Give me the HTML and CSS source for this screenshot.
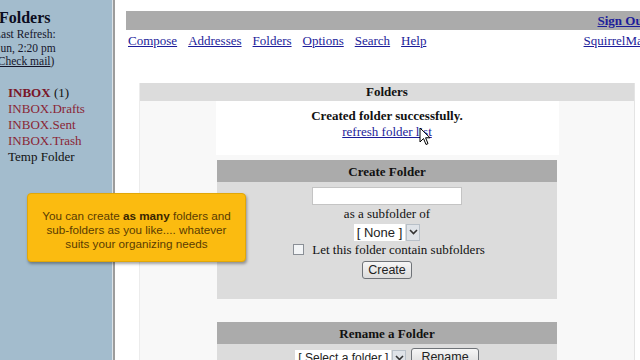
FILE: index.html
```html
<!DOCTYPE html>
<html lang="en">
<head>
  <meta charset="UTF-8">
  <title>SquirrelMail - Folders</title>
  <link rel="stylesheet" href="styles.css">
</head>
<body>

  <div class="page">
    <!-- left folder frame -->
    <div class="left">
      <div class="left-title">Folders</div>
      <div class="refresh">
        Last Refresh:<br>
        Sun, 2:20 pm<br>
        (<a href="#">Check mail</a>)
      </div>
      <ul class="folder-list">
        <li><span class="inbox">INBOX</span> (1)</li>
        <li class="sub">INBOX.Drafts</li>
        <li class="sub">INBOX.Sent</li>
        <li class="sub">INBOX.Trash</li>
        <li>Temp Folder</li>
      </ul>
    </div>
    <div class="divider"></div>

    <!-- right main frame -->
    <div class="right">
      <div class="topbar"><a href="#">Sign Out</a></div>
      <div class="nav">
        <div class="nav-links">
          <a href="#">Compose</a>
          <a href="#">Addresses</a>
          <a href="#">Folders</a>
          <a href="#">Options</a>
          <a href="#">Search</a>
          <a href="#">Help</a>
        </div>
        <a href="#" class="brand">SquirrelMail</a>
      </div>

      <div class="folders-box">
        <div class="folders-title">Folders</div>

        <div class="message">
          <b>Created folder successfully.</b><br>
          <a href="#" class="refresh-link">refresh folder list</a>
          <svg class="cursor" width="12" height="19" viewBox="0 0 12 19">
            <path d="M1 1 L1 15 L4.5 11.5 L7 17.5 L9 16.6 L6.6 10.8 L11 10.8 Z" fill="#fff" stroke="#000" stroke-width="1" stroke-linejoin="round"/>
          </svg>
        </div>

        <div class="panel">
          <div class="panel-head">Create Folder</div>
          <div class="panel-body">
            <div class="text-input"></div>
            <div class="row">as a subfolder of</div>
            <div class="row">
              <span class="select"><span class="select-val">[ None ]</span><span class="select-arrow"><svg width="9" height="6" viewBox="0 0 9 6"><path d="M1 1 L4.5 4.5 L8 1" fill="none" stroke="#333" stroke-width="1.6"/></svg></span></span>
            </div>
            <div class="row check-row"><span class="checkbox"></span>Let this folder contain subfolders</div>
            <div class="row"><span class="button">Create</span></div>
          </div>
        </div>

        <div class="panel rename">
          <div class="panel-head">Rename a Folder</div>
          <div class="panel-body rename-body">
            <span class="select"><span class="select-val">[ Select a folder ]</span><span class="select-arrow"><svg width="9" height="6" viewBox="0 0 9 6"><path d="M1 1 L4.5 4.5 L8 1" fill="none" stroke="#333" stroke-width="1.6"/></svg></span></span>
            <span class="button">Rename</span>
          </div>
        </div>
      </div>
    </div>
  </div>

  <!-- tutorial callout -->
  <div class="callout">
    You can create <b>as many</b> folders and<br>
    sub-folders as you like.... whatever<br>
    suits your organizing needs
  </div>

</body>
</html>
```

FILE: styles.css
```css
body {
  margin: 0;
  height: 360px;
  overflow: hidden;
  background: #fff;
  font-family: "Liberation Serif", "Times New Roman", serif;
  font-size: 13px;
  color: #111;
}

a {
  color: #1c1c9a;
}

.page {
  display: flex;
  height: 360px;
}

/* left frame */
.left {
  width: 112px;
  flex-shrink: 0;
  background: #a3bccd;
  overflow: hidden;
}
.left-title {
  margin: 9px 0 0 -1px;
  font-size: 16px;
  font-weight: bold;
  line-height: 18px;
  color: #0c0c20;
}
.refresh {
  margin: 1px 0 0 -6px;
  font-size: 11.5px;
  line-height: 13.5px;
  color: #15152a;
}
.refresh a {
  color: #15152a;
}
.folder-list {
  list-style: none;
  margin: 16px 0 0;
  padding: 0 0 0 8px;
  line-height: 16px;
  font-size: 13px;
}
.inbox {
  font-weight: bold;
  color: #7a1628;
}
.sub {
  color: #8a2535;
}

.divider {
  width: 2px;
  flex-shrink: 0;
  border-left: 1px solid #dce2e6;
  background: #9c9c9c;
}

/* right frame */
.right {
  flex: 1;
  overflow: hidden;
  padding-left: 11px;
}
.topbar {
  margin-top: 11px;
  width: 521px;
  height: 19px;
  padding-right: 13px;
  background: #ababab;
  text-align: right;
  font-weight: bold;
  line-height: 20px;
}
.nav {
  display: flex;
  justify-content: space-between;
  width: 522px;
  padding: 3px 0 0 2px;
  line-height: 16px;
}
.nav-links {
  display: flex;
  gap: 11px;
}

.folders-box {
  margin: 34px 0 0 13px;
  width: 494px;
  height: 300px;
  border-right: 1px solid #e4e4e4;
  border-left: 1px solid #ececec;
  background: #f8f8f8;
}
.folders-title {
  height: 18px;
  line-height: 18px;
  background: #dcdcdc;
  text-align: center;
  font-weight: bold;
}

.message {
  position: relative;
  width: 343px;
  margin: 0 auto;
  padding: 7px 0 15px;
  background: #fff;
  text-align: center;
  line-height: 16px;
}
.cursor {
  position: absolute;
  left: 203px;
  top: 26px;
}

.panel {
  width: 340px;
  margin: 5px auto 0;
  text-align: center;
}
.panel-head {
  height: 22px;
  line-height: 23px;
  background: #ababab;
  font-weight: bold;
}
.panel-body {
  background: #dcdcdc;
  padding: 5px 0 20px;
}
.text-input {
  width: 148px;
  height: 16px;
  margin: 0 auto;
  border: 1px solid #c4c4c4;
  background: #fff;
}
.row {
  margin-top: 1px;
  line-height: 16px;
}
.check-row {
  margin-top: 1px;
  display: flex;
  justify-content: center;
  align-items: center;
  gap: 8px;
  padding-left: 4px;
}
.checkbox {
  width: 9px;
  height: 9px;
  border: 1px solid #8a8f96;
  background: #f2f4f6;
}

.select {
  display: inline-flex;
  align-items: stretch;
  height: 17px;
  vertical-align: middle;
  font-family: "Liberation Sans", Arial, sans-serif;
  font-size: 13px;
}
.select-val {
  padding: 0 3px;
  line-height: 17px;
  background: #fff;
  color: #222;
}
.select-arrow {
  width: 12px;
  margin-left: 1px;
  display: flex;
  align-items: center;
  justify-content: center;
  border: 1px solid #b8c0c8;
  background: #dfe3e8;
}

.button {
  display: inline-block;
  height: 16px;
  padding: 0 5px;
  margin-top: 2px;
  border: 1px solid #6f7378;
  border-radius: 3px;
  background: linear-gradient(#f6f6f6, #dcdcdc);
  font-family: "Liberation Sans", Arial, sans-serif;
  font-size: 12.5px;
  line-height: 16px;
  color: #222;
}

.rename {
  margin-top: 23px;
}
.rename-body {
  padding-top: 4px;
  display: flex;
  justify-content: center;
  align-items: flex-start;
  gap: 5px;
}
.rename-body .select {
  margin-top: 2px;
  font-size: 12px;
}
.rename-body .button {
  padding: 0 9px;
  margin-top: 0;
}

/* callout */
.callout {
  position: absolute;
  left: 27px;
  top: 193px;
  width: 217px;
  height: 52px;
  padding-top: 15px;
  border: 1px solid #e1a708;
  border-radius: 4px;
  background: #fbbb10;
  box-shadow: 1px 2px 3px rgba(0, 0, 0, 0.35);
  text-align: center;
  font-family: "Liberation Sans", Arial, sans-serif;
  font-size: 11.7px;
  line-height: 14px;
  color: #5a3c02;
}
.callout b {
  color: #3a2600;
}
```
